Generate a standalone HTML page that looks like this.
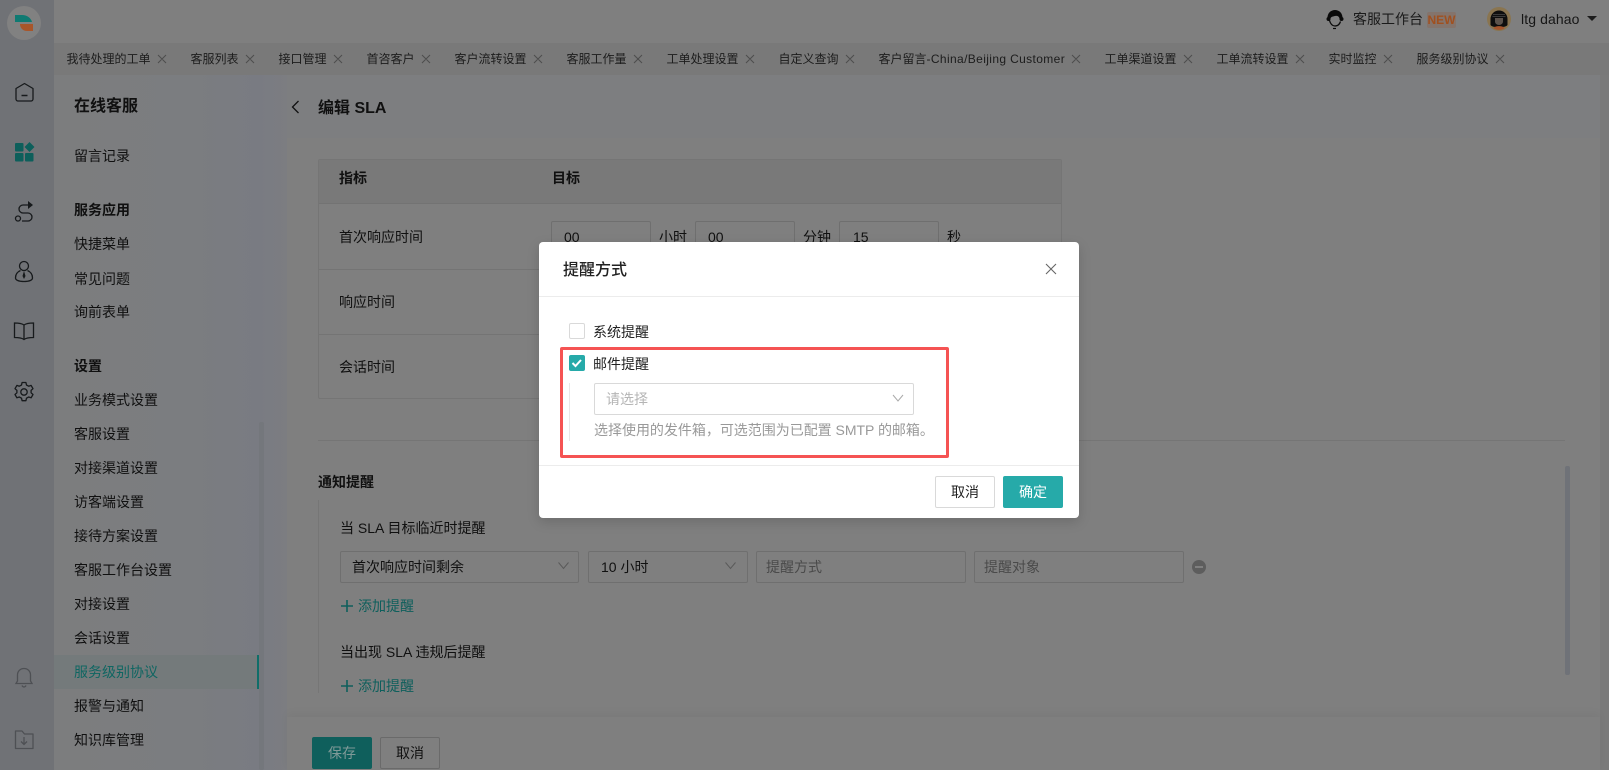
<!DOCTYPE html>
<html lang="zh-CN"><head><meta charset="utf-8"><title>编辑 SLA</title>
<style>
*{box-sizing:border-box}
html,body{margin:0;padding:0}
body{width:1609px;height:770px;overflow:hidden;position:relative;background:#7f7f7f;font-family:"Liberation Sans","Noto Sans CJK SC",sans-serif;font-size:14px;color:#101010}
.a{position:absolute}
.t{position:absolute;line-height:20px;height:20px;white-space:nowrap}
.b{font-weight:700}
.tab{position:absolute;top:49px;font-size:12px;line-height:20px;color:#1c1c1c;white-space:nowrap}
.box{position:absolute;border:1px solid #6f6f6f;border-radius:2px}
.g{color:#4a4a4a}
.teal{color:#0e5f5c}
svg{position:absolute;overflow:visible}
</style></head><body>
<!-- backgrounds -->
<div class="a" style="left:54px;top:0;width:1555px;height:43px;background:#7f7f7f"></div>
<div class="a" style="left:54px;top:75px;width:233px;height:695px;background:linear-gradient(90deg,#7c7d7e 0,#7b7d80 60%,#797b82 88%,#7c7d81 100%)"></div>
<div class="a" style="left:287px;top:75px;width:1313px;height:64px;background:#7d7e80"></div>
<div class="a" style="left:287px;top:138px;width:1313px;height:632px;background:#7f7f7f"></div>
<div class="a" style="left:1600px;top:75px;width:9px;height:695px;background:#7a7a7a"></div>
<div class="a" style="left:0;top:0;width:54px;height:770px;background:#707276"></div>
<div class="a" style="left:54px;top:43px;width:1555px;height:32px;background:#797979"></div>

<!-- logo -->
<div class="a" style="left:7px;top:6px;width:34px;height:34px;border-radius:50%;background:#818181"></div>
<svg style="left:0;top:0" width="54" height="44"><path d="M15 15h7c5 0 9 3 10 7H15z" fill="#0f7a72"/><path d="M20 24h13v7H27c-4 0-7-3-7-7z" fill="#a8562a"/></svg>

<!-- rail icons -->
<svg style="left:0;top:0" width="54" height="770" fill="none" stroke="#171a1c" stroke-width="1.3">
<path d="M16 88.500 24.500 83.500 33 88.500V99a2 2 0 0 1-2 2H18a2 2 0 0 1-2-2z" stroke-linejoin="round"/><path d="M21.500 95.500h6" stroke-width="1.500"/>
<g fill="#0d5f5b" stroke="none"><rect x="15" y="143" width="8.500" height="8.500" rx="1"/><rect x="15" y="153" width="8.500" height="8.500" rx="1"/><rect x="25" y="153" width="8.500" height="8.500" rx="1"/><path d="M29.500 142 34.500 147 29.500 152 24.500 147z"/></g>
<g transform="translate(0,-2)"><path d="M32 207h-9a4 4 0 0 0 0 8h5a4 4 0 0 1 0 8h-6"/><circle cx="18" cy="220.500" r="2.500"/><path d="M28 203v8l5-4z" fill="#171a1c" stroke="none"/></g>
<g transform="translate(0,-1)"><circle cx="24" cy="267" r="4.500"/><path d="M20.500 271.500C17 273 15.500 276 15.500 279c0 2 3 3.500 8.500 3.500s8.500-1.500 8.500-3.500c0-3-1.500-6-5-7.500"/><path d="M24 272l-1.500 5 1.500 3 1.500-3z" fill="#171a1c" stroke="none"/></g>
<g transform="translate(0,-2)"><path d="M24 327c-2-1.500-5-2-9.500-2v14.500c4.500 0 7.500.5 9.500 2 2-1.500 5-2 9.500-2V325c-4.500 0-7.500.5-9.500 2zM24 327v14"/></g>
<g transform="translate(0,2)"><path d="M21.500 383l.6-2.500h3.800l.6 2.500 2.200 1.200 2.400-.8 1.900 3.300-1.900 1.700v2.400l1.900 1.700-1.900 3.300-2.400-.8-2.200 1.200-.6 2.500h-3.800l-.6-2.500-2.200-1.200-2.400.8-1.900-3.300 1.900-1.700v-2.400l-1.900-1.700 1.900-3.300 2.400.8z" stroke-linejoin="round"/><circle cx="24" cy="390" r="3.200"/></g>
<g stroke="#4e5054"><path d="M24 668.500c-4 0-6.500 3-6.500 6.500v6l-1.500 2.500h16L30.500 681v-6c0-3.500-2.500-6.500-6.500-6.500zM22 685.500c.5 1 1.200 1.500 2 1.500s1.500-.5 2-1.500"/>
<path d="M15.500 731h6.500l2.500 3h8.500v14.500h-17.500z" stroke-linejoin="round"/><path d="M24 737v7M21 741.500l3 3 3-3"/></g>
</svg>

<!-- topbar right -->
<svg style="left:1325px;top:8px" width="20" height="22"><path d="M2.500 11C2 5 6 2 10 2s8 3 7.500 9c-1 1.500-2.500 1-3-.5C14 8 12 7.500 10 8c-2 .5-4 .5-4.500 2.500C5 12 3 12.500 2.500 11z" fill="#0a0a0a"/><path d="M4.500 12.500c1 3.500 3 5.500 5.500 5.500 2.500 0 4.500-1.500 5.500-4.500" fill="none" stroke="#0a0a0a" stroke-width="1.300"/><circle cx="3.500" cy="11" r="2" fill="#0a0a0a"/><circle cx="16.500" cy="11" r="2" fill="#0a0a0a"/><path d="M8 20.500h3" stroke="#0a0a0a" stroke-width="1.200"/></svg>
<div class="t" style="left:1353px;top:9px;color:#1a1a1a">客服工作台</div>
<div class="a" style="left:1427px;top:12px;width:29px;height:16px;background:#84746c;border-radius:2px;color:#a0501f;font-size:12px;font-weight:700;text-align:center;line-height:16px">NEW</div>
<svg style="left:1487px;top:7px" width="24" height="24"><circle cx="12" cy="12" r="12" fill="#8a7550"/><path d="M3.500 12a8.500 8.500 0 0 1 17 0v6c-1.500 3-15.500 3-17 0z" fill="#0e0e0e"/><path d="M8 11h8v3.500c0 2-1.800 3.500-4 3.500s-4-1.500-4-3.500z" fill="#5c534c"/><path d="M6 7.500h12M5.500 9.500h13" stroke="#3a3a3a" stroke-width="1"/><path d="M6.500 21c1.500-2.500 9.500-2.500 11 0-2 2.500-9 2.500-11 0z" fill="#a5552c"/></svg>
<div class="t" style="left:1521px;top:9px;font-size:14px;letter-spacing:.1px;color:#161616">ltg dahao</div>
<svg style="left:1587px;top:16px" width="10" height="6"><path d="M0 0h10L5 5z" fill="#1c1c1c"/></svg>

<!-- tabs -->
<div class="tab" style="left:66.500px">我待处理的工单</div>
<div class="tab" style="left:190.500px">客服列表</div>
<div class="tab" style="left:278.500px">接口管理</div>
<div class="tab" style="left:366.500px">首咨客户</div>
<div class="tab" style="left:454.500px">客户流转设置</div>
<div class="tab" style="left:566.500px">客服工作量</div>
<div class="tab" style="left:666.500px">工单处理设置</div>
<div class="tab" style="left:778.500px">自定义查询</div>
<div class="tab" style="left:878.500px">客户留言<span style="letter-spacing:.37px">-China/Beijing Customer</span></div>
<div class="tab" style="left:1104.500px">工单渠道设置</div>
<div class="tab" style="left:1216.500px">工单流转设置</div>
<div class="tab" style="left:1328.500px">实时监控</div>
<div class="tab" style="left:1416.500px">服务级别协议</div>
<svg style="left:0;top:0" width="1609" height="75" fill="none" stroke="#4d4d4d" stroke-width="1"><path d="M158 55l8 8m0-8l-8 8M246 55l8 8m0-8l-8 8M334 55l8 8m0-8l-8 8M422 55l8 8m0-8l-8 8M534 55l8 8m0-8l-8 8M634 55l8 8m0-8l-8 8M746 55l8 8m0-8l-8 8M846 55l8 8m0-8l-8 8M1072 55l8 8m0-8l-8 8M1184 55l8 8m0-8l-8 8M1296 55l8 8m0-8l-8 8M1384 55l8 8m0-8l-8 8M1496 55l8 8m0-8l-8 8"/></svg>

<!-- sidebar -->
<div class="t b" style="left:74px;top:97px;font-size:16px">在线客服</div>
<div class="t" style="left:74px;top:146px">留言记录</div>
<div class="t b" style="left:74px;top:200px">服务应用</div>
<div class="t" style="left:74px;top:234px">快捷菜单</div>
<div class="t" style="left:74px;top:269px">常见问题</div>
<div class="t" style="left:74px;top:302px">询前表单</div>
<div class="t b" style="left:74px;top:356px">设置</div>
<div class="t" style="left:74px;top:390px">业务模式设置</div>
<div class="t" style="left:74px;top:424px">客服设置</div>
<div class="t" style="left:74px;top:458px">对接渠道设置</div>
<div class="t" style="left:74px;top:492px">访客端设置</div>
<div class="t" style="left:74px;top:526px">接待方案设置</div>
<div class="t" style="left:74px;top:560px">客服工作台设置</div>
<div class="t" style="left:74px;top:594px">对接设置</div>
<div class="t" style="left:74px;top:628px">会话设置</div>
<div class="a" style="left:54px;top:655px;width:205px;height:34px;background:#747a7b;border-right:2px solid #0f6e69"></div>
<div class="t teal" style="left:74px;top:662px;color:#0f6662">服务级别协议</div>
<div class="t" style="left:74px;top:696px">报警与通知</div>
<div class="t" style="left:74px;top:730px">知识库管理</div>
<div class="a" style="left:259px;top:422px;width:5px;height:348px;background:#74777c;border-radius:2px"></div>

<!-- page head -->
<svg style="left:291px;top:100px" width="10" height="14" fill="none" stroke="#111" stroke-width="1.300"><path d="M7.500 1 1.500 7l6 6"/></svg>
<div class="t b" style="left:318px;top:99px;font-size:16px">编辑 SLA</div>

<!-- table -->
<div class="a" style="left:318px;top:159px;width:744px;height:240px;border:1px solid #757575;border-radius:2px"></div>
<div class="a" style="left:319px;top:160px;width:742px;height:44px;background:#797979;border-bottom:1px solid #737373"></div>
<div class="a" style="left:319px;top:269px;width:742px;height:1px;background:#747474"></div>
<div class="a" style="left:319px;top:334px;width:742px;height:1px;background:#747474"></div>
<div class="t b" style="left:339px;top:168px">指标</div>
<div class="t b" style="left:552px;top:168px">目标</div>
<div class="t" style="left:339px;top:227px">首次响应时间</div>
<div class="t" style="left:339px;top:292px">响应时间</div>
<div class="t" style="left:339px;top:357px">会话时间</div>
<div class="box" style="left:551px;top:221px;width:100px;height:33px"></div>
<div class="box" style="left:695px;top:221px;width:100px;height:33px"></div>
<div class="box" style="left:839px;top:221px;width:100px;height:33px"></div>
<div class="t" style="left:564px;top:227px">00</div>
<div class="t" style="left:659px;top:227px">小时</div>
<div class="t" style="left:708px;top:227px">00</div>
<div class="t" style="left:803px;top:227px">分钟</div>
<div class="t" style="left:853px;top:227px">15</div>
<div class="t" style="left:947px;top:227px">秒</div>

<div class="a" style="left:318px;top:440px;width:1247px;height:1px;background:#757575"></div>
<div class="t b" style="left:318px;top:472px">通知提醒</div>
<div class="a" style="left:318px;top:500px;width:1px;height:193px;background:#767676"></div>
<div class="t" style="left:340px;top:518px">当 SLA 目标临近时提醒</div>
<div class="box" style="left:340px;top:551px;width:239px;height:32px"></div>
<div class="box" style="left:588px;top:551px;width:160px;height:32px"></div>
<div class="box" style="left:756px;top:551px;width:210px;height:32px"></div>
<div class="box" style="left:974px;top:551px;width:210px;height:32px"></div>
<div class="t" style="left:352px;top:557px">首次响应时间剩余</div>
<div class="t" style="left:601px;top:557px">10 小时</div>
<div class="t g" style="left:766px;top:557px">提醒方式</div>
<div class="t g" style="left:984px;top:557px">提醒对象</div>
<svg style="left:0;top:0" width="1609" height="770" fill="none" stroke="#5a5a5a" stroke-width="1"><path d="M558.500 562.500l5 6 5-6M725.500 562.500l5 6 5-6"/></svg>
<div class="a" style="left:1192px;top:560px;width:14px;height:14px;border-radius:50%;background:#5d5d5d"></div>
<div class="a" style="left:1195px;top:566px;width:8px;height:2px;background:#7f7f7f"></div>
<svg style="left:0;top:0" width="1609" height="770" fill="none" stroke="#0e5f5c" stroke-width="1.600"><path d="M347 600v12M341 606h12M347 680v12M341 686h12"/></svg>
<div class="t teal" style="left:358px;top:596px">添加提醒</div>
<div class="t" style="left:340px;top:642px">当出现 SLA 违规后提醒</div>
<div class="t teal" style="left:358px;top:676px">添加提醒</div>
<div class="a" style="left:1565px;top:466px;width:5px;height:209px;background:#6f7278;border-radius:2px"></div>

<!-- footer bar -->
<div class="a" style="left:287px;top:717px;width:1313px;height:53px;background:#7f7f7f;box-shadow:0 -4px 8px rgba(0,0,0,.04)"></div>
<div class="a" style="left:312px;top:737px;width:60px;height:32px;background:#0f5f5c;border-radius:2px;color:#7f9a98;text-align:center;line-height:32px">保存</div>
<div class="a" style="left:380px;top:737px;width:60px;height:32px;border:1px solid #6a6a6a;border-radius:2px;text-align:center;line-height:30px;color:#111">取消</div>

<!-- modal -->
<div class="a" style="left:539px;top:242px;width:540px;height:276px;background:#fff;border-radius:4px;box-shadow:0 4px 12px rgba(0,0,0,.15)"></div>
<div class="t b" style="left:563px;top:261px;font-size:16px;color:#222;font-weight:500">提醒方式</div>
<svg style="left:1045px;top:263px" width="12" height="12" fill="none" stroke="#666" stroke-width="1.100"><path d="M1 1l10 10M11 1 1 11"/></svg>
<div class="a" style="left:539px;top:296px;width:540px;height:1px;background:#ececec"></div>
<div class="a" style="left:569px;top:323px;width:16px;height:16px;border:1px solid #d9d9d9;border-radius:2px;background:#fff"></div>
<div class="t" style="left:593px;top:322px;color:#222">系统提醒</div>
<div class="a" style="left:569px;top:355px;width:16px;height:16px;background:#26aaa9;border-radius:2px"></div>
<svg style="left:569px;top:355px" width="16" height="16" fill="none" stroke="#fff" stroke-width="2"><path d="M3.500 8l3 3 5.500-6"/></svg>
<div class="t" style="left:593px;top:354px;color:#222">邮件提醒</div>
<div class="a" style="left:569px;top:383px;width:1px;height:58px;background:#e8e8e8"></div>
<div class="a" style="left:594px;top:383px;width:320px;height:32px;border:1px solid #d9d9d9;border-radius:2px;background:#fff"></div>
<div class="t" style="left:606px;top:389px;color:#b5b5b5">请选择</div>
<svg style="left:892px;top:394px" width="12" height="9" fill="none" stroke="#aaa" stroke-width="1"><path d="M1 1l5 6 5-6"/></svg>
<div class="t" style="left:594px;top:420px;color:#999;font-size:14px;letter-spacing:-.02px">选择使用的发件箱，可选范围为已配置 SMTP 的邮箱。</div>
<div class="a" style="left:560px;top:347px;width:389px;height:111px;border:3.500px solid #f55353;border-radius:2px"></div>
<div class="a" style="left:539px;top:465px;width:540px;height:1px;background:#ececec"></div>
<div class="a" style="left:935px;top:476px;width:60px;height:32px;border:1px solid #d9d9d9;border-radius:2px;background:#fff;text-align:center;line-height:30px;color:#222">取消</div>
<div class="a" style="left:1003px;top:476px;width:60px;height:32px;background:#26aaa9;border-radius:2px;color:#fff;text-align:center;line-height:32px">确定</div>
</body></html>
